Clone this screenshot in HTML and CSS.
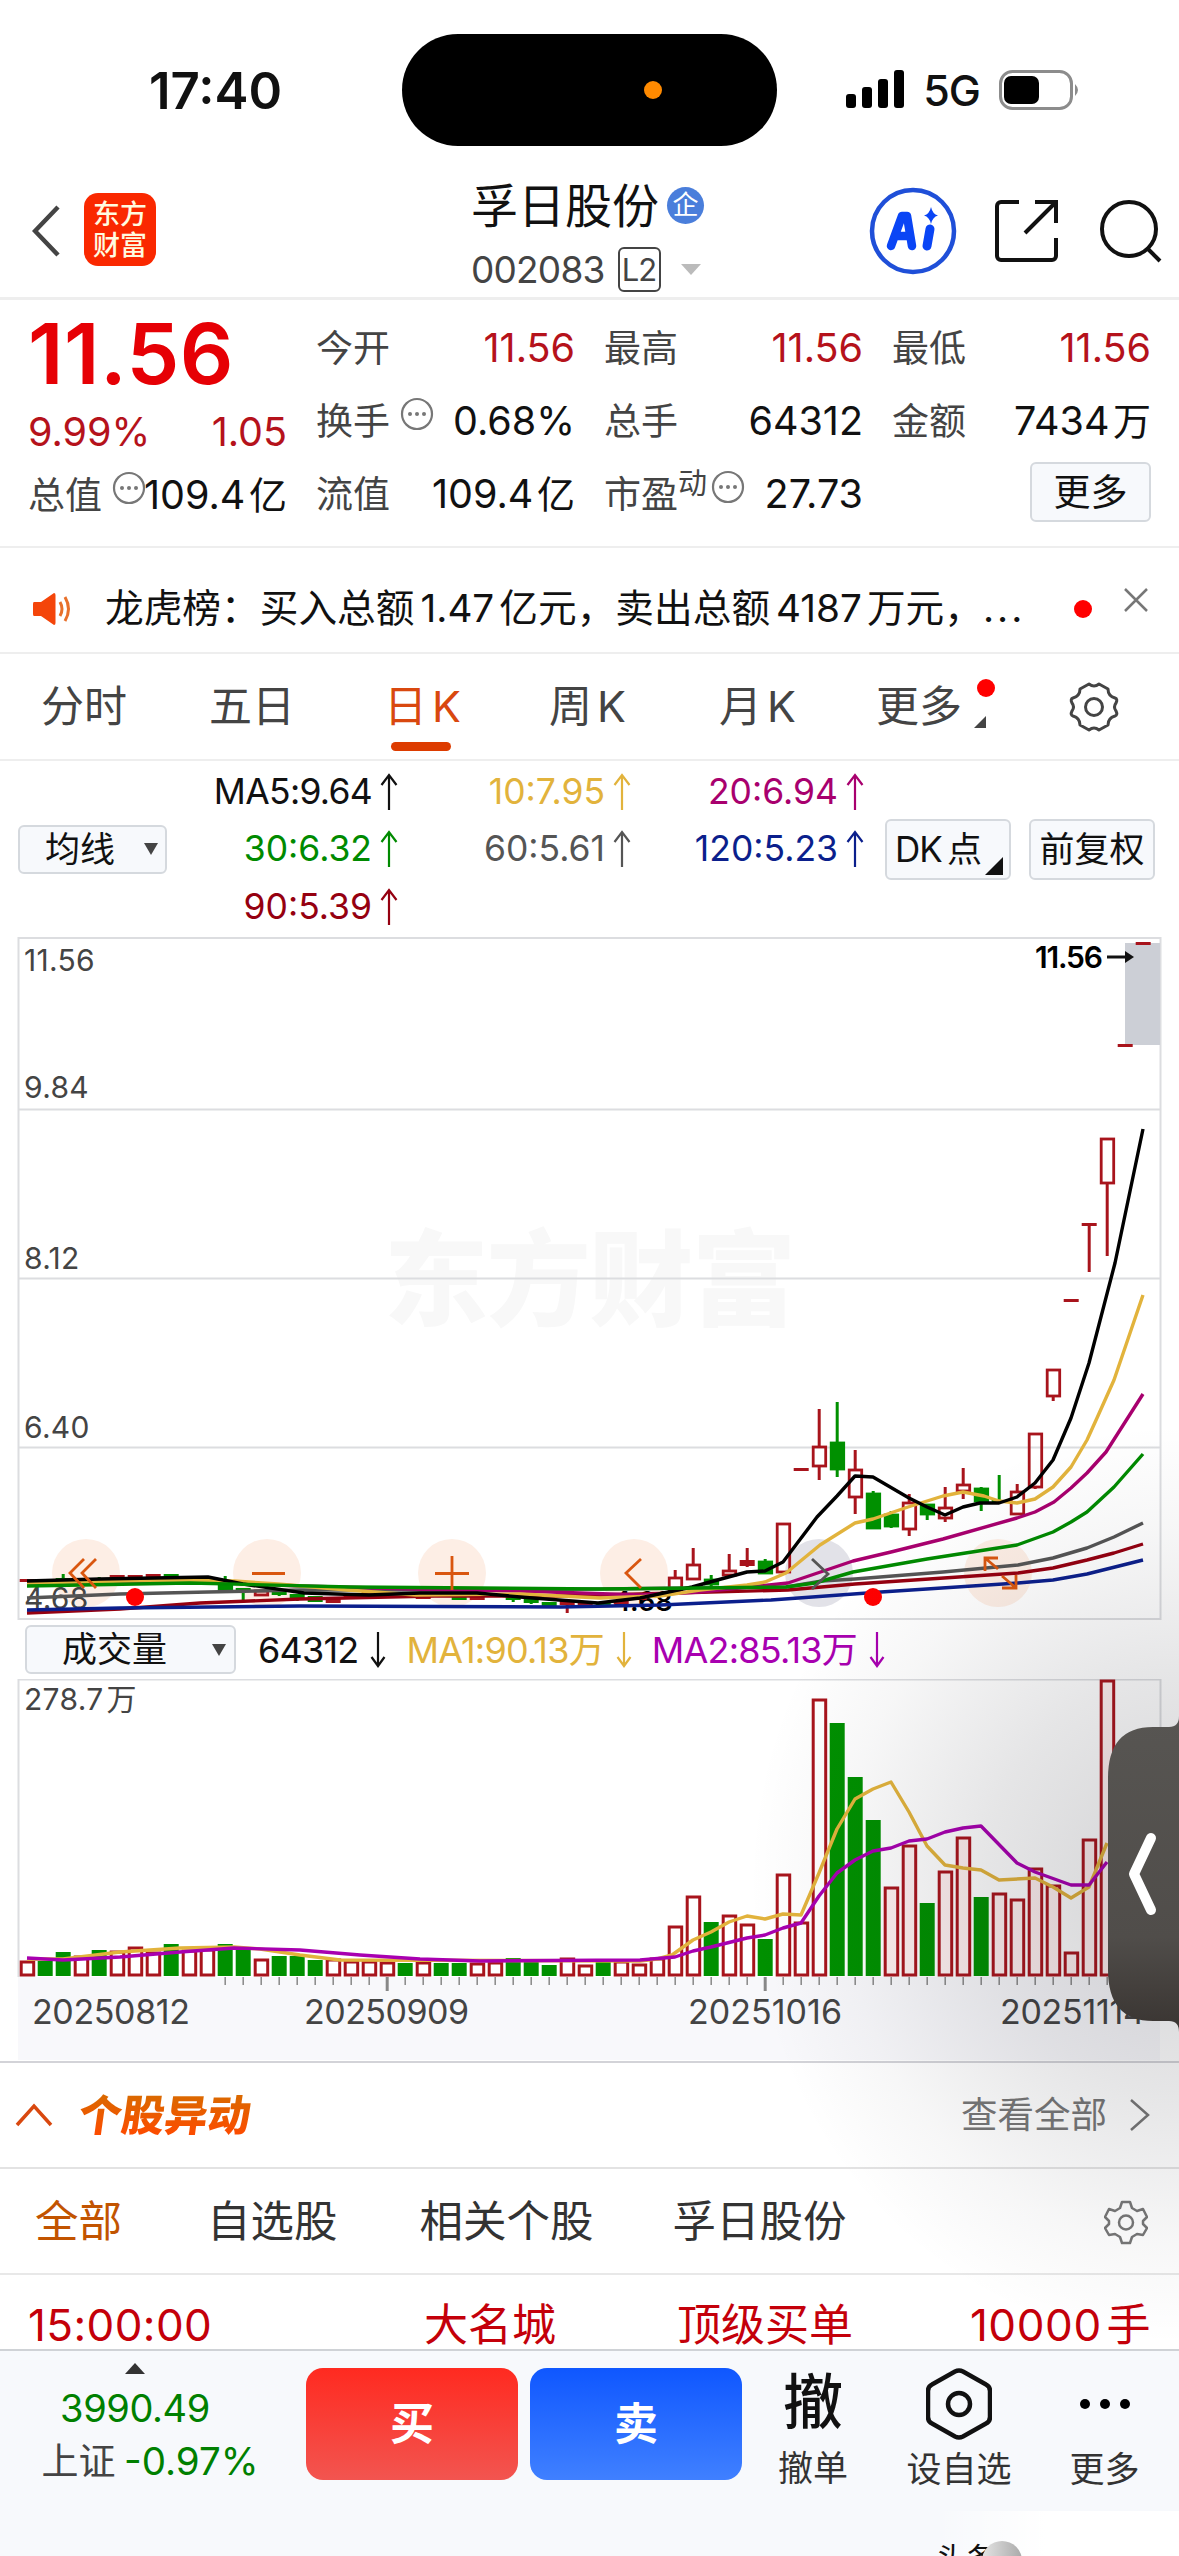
FILE: index.html
```html
<!DOCTYPE html>
<html lang="zh-CN">
<head>
  <meta charset="UTF-8">
  <meta name="viewport" content="width=device-width, initial-scale=1.0">
  <title>孚日股份 002083</title>
  <link rel="stylesheet" href="styles.css">
</head>
<body>
  <svg width="0" height="0" class="sprite">
    <symbol id="up" viewBox="0 0 18 38"><path d="M9 37V2M1.5 12L9 2l7.500 10" fill="none" stroke="currentColor" stroke-width="2.200"/></symbol>
    <symbol id="down" viewBox="0 0 16 36"><path d="M8 0v34M1.500 25L8 34l6.500-9" fill="none" stroke="currentColor" stroke-width="2.200"/></symbol>
    <symbol id="info" viewBox="0 0 34 34"><circle cx="17" cy="17" r="15" fill="none" stroke="#777" stroke-width="2.200"/><g fill="#777"><circle cx="10" cy="17" r="2"/><circle cx="17" cy="17" r="2"/><circle cx="24" cy="17" r="2"/></g></symbol>
  </svg>

  <div class="statusbar">
    <span class="time">17:40</span>
    <div class="island"><i></i></div>
    <div class="signal">
      <svg width="58" height="40" viewBox="0 0 58 40"><rect x="0" y="24" width="10" height="14" rx="3"/><rect x="16" y="17" width="10" height="21" rx="3"/><rect x="32" y="9" width="10" height="29" rx="3"/><rect x="48" y="0" width="10" height="38" rx="3"/></svg>
      <span>5G</span>
      <svg width="82" height="40" viewBox="0 0 82 40"><rect x="1.500" y="1.500" width="71" height="37" rx="12" fill="none" stroke="#8c8c8c" stroke-width="3"/><rect x="5" y="6" width="35" height="28" rx="7"/><path d="M76 14q6 6 0 12z" fill="#8c8c8c"/></svg>
    </div>
  </div>

  <header class="header">
    <svg class="back" width="28" height="52" viewBox="0 0 28 52"><path d="M26 2L3 26l23 24" fill="none" stroke="#444" stroke-width="4.500"/></svg>
    <div class="logo">东方<br>财富</div>
    <div class="title">
      <div class="name">孚日股份<span class="badge">企</span></div>
      <div class="code">002083<span class="l2">L2</span><span class="caret"></span></div>
    </div>
    <div class="tools">
      <svg width="88" height="88" viewBox="0 0 88 88"><circle cx="44" cy="44" r="41" fill="#fff" stroke="#1f4fd8" stroke-width="4.500"/><path d="M22 59L33 29h5l5 30M28 49h13" fill="none" stroke="#0a45f5" stroke-width="8.500" stroke-linejoin="round" stroke-linecap="round"/><path d="M61 42l-3 17" stroke="#0a45f5" stroke-width="9" stroke-linecap="round"/><path d="M62 20q1.500 7 7 8.500q-5.500 1.500-7 8.500q-1.500-7-7-8.500q5.500-1.500 7-8.500z" fill="#0a45f5"/></svg>
      <svg class="share" width="64" height="64" viewBox="0 0 64 64"><path d="M24 3H6a4 4 0 0 0-4 4v50a4 4 0 0 0 4 4h51a4 4 0 0 0 4-4V39M40 3h21v21M61 3L30 34" fill="none" stroke="#111" stroke-width="4"/></svg>
      <svg class="search" width="64" height="66" viewBox="0 0 64 66"><circle cx="29" cy="31" r="27" fill="none" stroke="#111" stroke-width="4"/><path d="M48 51l12 12" stroke="#111" stroke-width="4"/></svg>
    </div>
  </header>

  <section class="quote">
    <div class="col first">
      <div class="price">11.56</div>
      <div class="row red"><span>9.99%</span><span>1.05</span></div>
      <div class="row"><label>总值<svg class="info"><use href="#info"/></svg></label><span>109.4&hairsp;<u>亿</u></span></div>
    </div>
    <div class="col">
      <div class="row"><label>今开</label><span class="red">11.56</span></div>
      <div class="row"><label>换手<svg class="info"><use href="#info"/></svg></label><span>0.68%</span></div>
      <div class="row"><label>流值</label><span>109.4&hairsp;<u>亿</u></span></div>
    </div>
    <div class="col">
      <div class="row"><label>最高</label><span class="red">11.56</span></div>
      <div class="row"><label>总手</label><span>64312</span></div>
      <div class="row"><label>市盈<sup>动</sup><svg class="info pe"><use href="#info"/></svg></label><span>27.73</span></div>
    </div>
    <div class="col">
      <div class="row"><label>最低</label><span class="red">11.56</span></div>
      <div class="row"><label>金额</label><span>7434&hairsp;<u>万</u></span></div>
      <div class="row end"><button class="more">更多</button></div>
    </div>
  </section>

  <section class="notice">
    <svg width="40" height="34" viewBox="0 0 40 34"><path d="M1 10h7L21 1q1.500 0 1.500 2v28q0 2-1.500 2L8 24H1q-1 0-1-2V12q0-2 1-2z" fill="#f4450a"/><path d="M27 10q4 7 0 14M32 5q7 12 0 24" fill="none" stroke="#e8702a" stroke-width="3"/></svg>
    <p>龙虎榜：买入总额<b>1.47</b>亿元，卖出总额<b>4187</b>万元，<em>...</em></p>
    <i class="dot"></i>
    <svg class="close" width="26" height="26" viewBox="0 0 26 26"><path d="M2 2l22 22M24 2L2 24" stroke="#777" stroke-width="2.500"/></svg>
  </section>

  <nav class="tabs">
    <a>分时</a><a>五日</a><a class="active">日<span>K</span></a><a>周<span>K</span></a><a>月<span>K</span></a>
    <a class="has-new">更多<i class="dot"></i><i class="corner"></i></a>
    <svg width="50" height="52" viewBox="0 0 50 52"><path d="M20 3q5 4 10 0l9 5q0 7 7 9q3 1 1 5q-3 4 0 8q2 4-1 5q-7 2-7 9l-9 5q-5-4-10 0l-9-5q0-7-7-9q-3-1-1-5q3-4 0-8q-2-4 1-5q7-2 7-9z" fill="none" stroke="#444" stroke-width="3" stroke-linejoin="round"/><circle cx="25" cy="26" r="8.500" fill="none" stroke="#444" stroke-width="3"/></svg>
  </nav>

  <section class="ma">
    <button class="select">均线</button>
    <div class="ma-list">
      <span class="c5">MA5:9.64<svg><use href="#up"/></svg></span>
      <span class="c10">10:7.95<svg><use href="#up"/></svg></span>
      <span class="c20">20:6.94<svg><use href="#up"/></svg></span>
      <span class="c30">30:6.32<svg><use href="#up"/></svg></span>
      <span class="c60">60:5.61<svg><use href="#up"/></svg></span>
      <span class="c120">120:5.23<svg><use href="#up"/></svg></span>
      <span class="c90">90:5.39<svg><use href="#up"/></svg></span>
    </div>
    <button class="dk">DK&thinsp;点</button>
    <button class="fq">前复权</button>
  </section>

  <svg id="kline" class="chart" width="1179" height="683" viewBox="0 937 1179 683">
    <text class="watermark" x="384" y="1318" textLength="412">东方财富</text>
    <g class="grid">
      <rect x="18.500" y="938" width="1142" height="681"/>
      <path d="M18 1109.500h1142M18 1278.500h1142M18 1447.500h1142"/>
    </g>
    <rect x="1125" y="943" width="35" height="102" fill="#cccfd6"/>
    <g class="hot">
      <circle cx="86" cy="1573" r="34"/><circle cx="267" cy="1573" r="34"/><circle cx="452" cy="1573" r="34"/>
      <circle cx="634" cy="1573" r="34"/><circle cx="819" cy="1573" r="34" class="off"/><circle cx="998" cy="1573" r="34"/>
    </g>
    <g class="scale">
      <text x="24" y="971">11.56</text><text x="24" y="1098">9.84</text><text x="24" y="1269">8.12</text>
      <text x="24" y="1438">6.40</text><text x="24" y="1609">4.68</text>
    </g>
    <text class="low" x="613" y="1611">4.68</text>
    <g id="candles"></g>
    <g id="averages" class="lines"></g>
    <g class="hot-icons">
      <path d="M84 1559l-14 14l14 15M96 1559l-14 14l14 15M252 1573.500h33M435 1573.500h34M452 1556v34M641 1559l-15 14l15 15"/>
      <path class="off" d="M812 1559l16 15l-16 15"/>
      <path d="M985 1571v-13h13M985 1558l13 11M1016 1575v13h-14M1016 1588l-14-12"/>
    </g>
    <circle cx="135" cy="1597" r="9" fill="#f00"/><circle cx="873" cy="1597" r="9" fill="#f00"/>
    <text class="high" x="1035" y="968" textLength="68">11.56</text>
    <path d="M1107 957h22" stroke="#111" stroke-width="3"/><path d="M1125 951l9 6l-9 6z" fill="#111"/>
  </svg>

  <section class="vol">
    <button class="select wide">成交量</button>
    <span class="v0">64312<svg><use href="#down"/></svg></span>
    <span class="v1">MA1:90.13万<svg><use href="#down"/></svg></span>
    <span class="v2">MA2:85.13万<svg><use href="#down"/></svg></span>
  </section>

  <svg id="volume" class="chart" width="1179" height="383" viewBox="0 1679 1179 383">
    <rect x="18" y="1977" width="1142" height="83" fill="#f8f8fb"/>
    <path class="grid" d="M18.500 1977V1679.500H1160.500V1977"/>
    <text class="vmax" x="24" y="1710">278.7&hairsp;万</text>
    <g id="bars"></g>
    <g id="volumeLines" class="lines"></g>
    <g class="dates">
      <text x="32" y="2024" textLength="158">20250812</text><text x="304" y="2024" textLength="165">20250909</text>
      <text x="688" y="2024" textLength="154">20251016</text><text x="1000" y="2024" textLength="145">20251114</text>
    </g>
  </svg>

  <section class="moves">
    <svg width="38" height="24" viewBox="0 0 38 24"><path d="M2 22L19 3l17 19" fill="none" stroke="#d9480f" stroke-width="3.500"/></svg>
    <h2>个股异动</h2>
    <a>查看全部</a>
    <svg class="go" width="22" height="36" viewBox="0 0 22 36"><path d="M2 3l17 15L2 33" fill="none" stroke="#777" stroke-width="2.500"/></svg>
  </section>

  <nav class="filters">
    <a class="active">全部</a><a>自选股</a><a>相关个股</a><a>孚日股份</a>
    <svg width="44" height="46" viewBox="0 0 44 46"><path d="M18 3h8l2 6l5 3l6-2l4 8l-4 4v3l4 4l-4 7l-6-1l-5 3l-2 6h-8l-2-6l-5-3l-6 1l-4-7l4-4v-3l-4-4l4-8l6 2l5-3z" fill="none" stroke="#777" stroke-width="2.500" stroke-linejoin="round"/><circle cx="22" cy="23.500" r="7" fill="none" stroke="#777" stroke-width="2.500"/></svg>
  </nav>

  <section class="deal">
    <span class="clock">15:00:00</span><span>大名城</span><span>顶级买单</span><span class="lots">10000&hairsp;手</span>
  </section>

  <footer class="bar">
    <div class="index">
      <i></i>
      <b>3990.49</b>
      <p>上证 <span>-0.97%</span></p>
    </div>
    <button class="buy">买</button>
    <button class="sell">卖</button>
    <div class="act cancel"><strong>撤</strong><span>撤单</span></div>
    <div class="act fav">
      <svg width="66" height="72" viewBox="0 0 66 72"><path d="M29 3.500q4-2 8 0l23 13q4 2 4 6.500v26q0 4.500-4 6.500l-23 13q-4 2-8 0l-23-13q-4-2-4-6.500V23q0-4.500 4-6.500z" fill="none" stroke="#111" stroke-width="4.500"/><circle cx="33" cy="36" r="11" fill="none" stroke="#111" stroke-width="4.500"/></svg>
      <span>设自选</span>
    </div>
    <div class="act menu">
      <svg width="52" height="72" viewBox="0 0 52 72"><circle cx="6" cy="36" r="5"/><circle cx="26" cy="36" r="5"/><circle cx="46" cy="36" r="5"/></svg>
      <span>更多</span>
    </div>
    <div class="stamp"><span>头条</span><i></i></div>
  </footer>

  <div class="shade"></div>
  <svg class="drawer" width="72" height="316" viewBox="0 0 72 316">
    <defs><linearGradient id="dg" x1="0" y1="0" x2="0" y2="1"><stop offset="0" stop-color="#575552"/><stop offset=".7" stop-color="#504d4a"/><stop offset="1" stop-color="#393431"/></linearGradient></defs>
    <path d="M72 0q0 11-10 11H46Q1 11 1 62v192q0 51 45 51h16q10 0 10 11z" fill="url(#dg)"/>
    <path d="M44 122L27 158l17 36" fill="none" stroke="#fff" stroke-width="10" stroke-linecap="round" stroke-linejoin="round"/>
  </svg>

  <script src="chart.js"></script>
</body>
</html>
```

FILE: styles.css
```css
* {
  box-sizing: border-box;
}
body {
  margin: 0;
  width: 1179px;
  height: 2556px;
  position: relative;
  overflow: hidden;
  background: #fff;
  color: #111;
  font-family: Inter, "Noto Sans CJK SC", sans-serif;
  font-size: 37px;
  line-height: 1;
}
p, h2 {
  margin: 0;
}
svg {
  display: block;
  flex: none;
}
.sprite {
  position: absolute;
}
button {
  font: inherit;
  color: #111;
  padding: 0;
  background: #f7f9fc;
  border: 2px solid #d5d9de;
  border-radius: 6px;
  white-space: nowrap;
}
.dot {
  width: 18px;
  height: 18px;
  border-radius: 50%;
  background: #f00;
}
.red {
  color: #b5121b;
}

/* status bar */
.statusbar {
  height: 160px;
  padding: 34px 98px 0 149px;
  display: flex;
}
.time {
  width: 253px;
  margin-top: 31px;
  font-size: 51px;
  font-weight: 600;
}
.island {
  width: 375px;
  height: 112px;
  border-radius: 56px;
  background: #000;
  display: flex;
  align-items: center;
  justify-content: flex-end;
  padding-right: 115px;
}
.island i {
  width: 18px;
  height: 18px;
  border-radius: 50%;
  background: #ff8a00;
}
.signal {
  display: flex;
  margin: 36px 0 0 auto;
  height: 40px;
  width: 235px;
  justify-content: space-between;
  align-items: center;
}
.signal span {
  font-size: 43px;
  font-weight: 500;
  letter-spacing: -1px;
}

/* header */
.header {
  height: 140px;
  padding-left: 32px;
  display: flex;
  border-bottom: 3px solid #eee;
}
.back {
  margin-top: 45px;
}
.logo {
  margin: 33px 0 0 24px;
  width: 72px;
  height: 73px;
  border-radius: 14px;
  background: #fa2800;
  color: #fffbe0;
  font-size: 27px;
  font-weight: 500;
  line-height: 31px;
  padding-top: 6px;
  text-align: center;
}
.title {
  margin-left: 315px;
  width: 398px;
}
.name {
  height: 87px;
  padding-top: 22px;
  font-size: 47px;
  display: flex;
}
.badge {
  margin: 5px 0 0 8px;
  width: 37px;
  height: 37px;
  line-height: 35px;
  border-radius: 50%;
  background: #4a7edb;
  color: #fff;
  font-size: 26px;
  text-align: center;
}
.code {
  height: 45px;
  display: flex;
  align-items: center;
  color: #444;
  letter-spacing: -0.8px;
}
.l2 {
  margin-left: 13px;
  width: 43px;
  height: 45px;
  border: 2px solid #444;
  border-radius: 6px;
  font-size: 31px;
  line-height: 42px;
  text-align: center;
  letter-spacing: -1px;
}
.caret {
  margin-left: 20px;
  border: 10px solid transparent;
  border-top: 11px solid #bbb;
  border-bottom: 0;
}
.tools {
  display: flex;
  padding-top: 27px;
}
.share {
  margin: 12px 0 0 38px;
}
.search {
  margin: 11px 0 0 41px;
}

/* quote table */
.quote {
  height: 248px;
  padding: 12px 28px 0;
  display: grid;
  grid-template-columns: repeat(4, 259px);
  justify-content: space-between;
  border-bottom: 2px solid #eee;
}
.row {
  height: 73px;
  display: flex;
  align-items: center;
  justify-content: space-between;
  white-space: nowrap;
}
.row span {
  font-size: 39.500px;
  margin-top: 1px;
}
.row u {
  font-size: 38px;
  text-decoration: none;
}
.row label {
  color: #444;
  display: flex;
}
.first .row:last-child {
  height: 52px;
}
.price {
  height: 84px;
  line-height: 84px;
  font-size: 84px;
  font-weight: 600;
  color: #e60005;
  letter-spacing: 0.5px;
}
.info {
  width: 34px;
  height: 34px;
  margin: -6px 0 0 10px;
}
.first .info {
  margin-right: -40px;
}
.info.pe {
  margin-left: 4px;
}
sup {
  font-size: 29px;
  line-height: 1;
  margin-top: -7px;
}
.end {
  justify-content: flex-end;
}
.more {
  width: 121px;
  height: 60px;
  margin-top: -5px;
}

/* notice */
.notice {
  height: 106px;
  padding-top: 17px;
  padding-left: 33px;
  display: flex;
  align-items: center;
  border-bottom: 2px solid #eee;
}
.notice p {
  width: 932px;
  margin-left: 32px;
  font-size: 38.700px;
  white-space: nowrap;
}
.notice b {
  font-weight: 400;
  margin: 0 5px 0 6px;
}
.notice em {
  font-style: normal;
  letter-spacing: 3px;
}
.notice .dot {
  margin-left: 37px;
}
.close {
  margin: -18px 0 0 31px;
}

/* period tabs */
.tabs {
  height: 107px;
  padding-left: 41px;
  display: grid;
  grid-template-columns: 168px 175px 165px 170px 157px 193px 50px;
  align-items: center;
  font-size: 43px;
  color: #444;
  border-bottom: 2px solid #eee;
}
.tabs a {
  position: relative;
  height: 60px;
  line-height: 58px;
  white-space: nowrap;
}
.tabs a span {
  margin-left: 5px;
}
.tabs .active {
  color: #d9480f;
}
.tabs .active::after {
  content: "";
  position: absolute;
  left: 7px;
  bottom: -14px;
  width: 60px;
  height: 9px;
  border-radius: 5px;
  background: #dd3c00;
}
.has-new .dot {
  position: absolute;
  left: 101px;
  top: 2px;
}
.corner {
  position: absolute;
  left: 98px;
  top: 39px;
  border-left: 12px solid transparent;
  border-bottom: 12px solid #444;
}

/* moving average legend */
.ma {
  height: 176px;
  padding-left: 18px;
  display: flex;
  align-items: center;
  font-size: 35px;
}
.select {
  width: 149px;
  height: 49px;
  padding-left: 25px;
  font-size: 35px;
  display: flex;
  align-items: center;
}
.select::after {
  content: "";
  margin-left: 29px;
  border: 7px solid transparent;
  border-top: 12px solid #444;
  border-bottom: 0;
}
.ma-list {
  width: 697px;
  display: grid;
  grid-template-columns: 231px 233px 233px;
  grid-auto-rows: 57.500px;
  font-size: 35.500px;
}
.ma-list span {
  display: flex;
  align-items: center;
  justify-content: flex-end;
}
.ma-list svg {
  width: 18px;
  height: 38px;
  margin-left: 8px;
}
.ma-list .c5 {
  letter-spacing: -0.7px;
}
.c10 { color: #e2b33c; }
.c20 { color: #a8006e; }
.c30 { color: #008a00; }
.c60 { color: #555; }
.c90 { color: #950010; }
.c120 { color: #0b1f8c; }
.dk, .fq {
  width: 126px;
  height: 61px;
  font-size: 35px;
}
.dk {
  position: relative;
  margin: 0 18px 0 21px;
  padding-right: 20px;
  letter-spacing: -1px;
}
.dk::after {
  content: "";
  position: absolute;
  right: 6px;
  bottom: 3px;
  border-left: 18px solid transparent;
  border-bottom: 18px solid #111;
}

/* charts */
.chart .grid {
  fill: none;
  stroke: #dcdde0;
  stroke-width: 2;
}
.scale, .vmax {
  font-size: 30px;
  fill: #444;
  letter-spacing: 0.3px;
}
.watermark {
  font-size: 104px;
  font-weight: 900;
  fill: #f8f8f8;
}
.high, .low {
  font-size: 30px;
  font-weight: 600;
}
.low {
  font-size: 27px;
}
.hot circle {
  fill: #fdeee5;
}
.hot .off {
  fill: #e2e2e8;
}
.hot-icons path {
  fill: none;
  stroke: #d9560f;
  stroke-width: 2.800;
}
.hot-icons .off {
  stroke: #555;
}
.lines path {
  fill: none;
  stroke-width: 3.400;
  stroke-linejoin: round;
}
.dates {
  font-size: 34px;
  fill: #444;
}
.vol {
  height: 59px;
  padding-left: 25px;
  display: flex;
  align-items: center;
  font-size: 36px;
  letter-spacing: -0.8px;
}
.vol span {
  display: flex;
  align-items: center;
  margin-left: 20px;
  white-space: nowrap;
}
.vol .v0 {
  margin-left: 22px;
}
.vol span svg {
  width: 16px;
  height: 36px;
  margin-left: 12px;
}
.wide {
  width: 211px;
  height: 49px;
  padding-left: 35px;
  letter-spacing: 0;
}
.wide::after {
  margin-left: 45px;
}
.v1 { color: #e2b33c; }
.v2 { color: #a800b0; }

/* unusual moves */
.moves {
  height: 108px;
  padding-left: 15px;
  margin-top: -1px;
  display: flex;
  align-items: center;
  border-top: 2px solid #d3d3d8;
  border-bottom: 2px solid #e3e3e3;
}
.moves h2 {
  margin-left: 26px;
  font-size: 43px;
  font-weight: 900;
  transform: skewX(-8deg);
  background: linear-gradient(#d96a00, #ff4a00);
  -webkit-background-clip: text;
  color: transparent;
}
.moves a {
  margin-left: auto;
  font-size: 36.500px;
  color: #777;
}
.go {
  margin: 0 28px 0 22px;
}
.filters {
  height: 106px;
  padding: 2px 31px 0 35px;
  display: flex;
  align-items: center;
  font-size: 43.500px;
  color: #333;
  border-bottom: 2px solid #e8e8e8;
}
.filters a {
  margin-right: 82px;
}
.filters a.active {
  margin-right: 85px;
  color: #c25400;
}
.filters a:nth-child(3) {
  margin-right: 79px;
}
.filters svg {
  margin-left: auto;
}
.deal {
  height: 74px;
  padding: 28px 28px 0;
  display: grid;
  grid-template-columns: 396px 253px 1fr auto;
  align-items: start;
  font-size: 44px;
  color: #c4000a;
}
.clock {
  letter-spacing: 0.4px;
}
.lots {
  letter-spacing: 0.6px;
}

/* bottom bar */
.bar {
  position: relative;
  height: 208px;
  display: flex;
  align-items: flex-start;
  background: #f7f9fc;
  border-top: 2px solid #cfd2d6;
}
.index {
  width: 306px;
  padding-right: 36px;
  text-align: center;
  color: #008000;
}
.index i {
  display: block;
  width: 0;
  margin: 12px auto 0;
  border: 10px solid transparent;
  border-bottom: 11px solid #333;
  border-top: 0;
}
.index b {
  display: block;
  margin-top: 15px;
  font-size: 38px;
  font-weight: 400;
  letter-spacing: -0.4px;
}
.index p {
  margin: 15px -30px 0 0;
  color: #444;
  white-space: nowrap;
  word-spacing: -2px;
}
.index span {
  color: #008000;
  font-size: 38.500px;
}
.buy, .sell {
  width: 212px;
  height: 112px;
  margin: 17px 12px 0 0;
  border: 0;
  border-radius: 17px;
  color: #fff;
  font-size: 44px;
  font-weight: 700;
  background: linear-gradient(#ff2a20, #f25550);
}
.sell {
  background: linear-gradient(#0f57ff, #4080ff);
}
.act {
  height: 135px;
  padding-top: 17px;
  display: flex;
  flex-direction: column;
  align-items: center;
  font-size: 35px;
  color: #333;
}
.act strong {
  height: 72px;
  line-height: 68px;
  font-size: 60px;
  font-weight: 500;
  color: #111;
}
.act span {
  margin-top: 12px;
}
.cancel {
  width: 118px;
}
.fav {
  width: 174px;
}
.menu {
  width: 117px;
}
.stamp {
  position: absolute;
  left: 936px;
  bottom: 0;
  width: 243px;
  height: 46px;
  overflow: hidden;
  background: linear-gradient(90deg, transparent, #fff 45%);
}
.stamp span {
  position: absolute;
  top: 32px;
  left: 0;
  font-size: 30px;
  color: #111;
}
.stamp i {
  position: absolute;
  left: 46px;
  top: 30px;
  width: 40px;
  height: 40px;
  border-radius: 50%;
  background: linear-gradient(90deg, #e4e4e4, #aaa);
}

/* floating drawer */
.shade {
  position: absolute;
  left: 740px;
  top: 1420px;
  width: 439px;
  height: 928px;
  background: radial-gradient(ellipse 430px 460px at 100% 50%, rgba(20, 20, 30, .19), rgba(20, 20, 30, .11) 45%, rgba(20, 20, 30, .035) 78%, transparent);
}
.drawer {
  position: absolute;
  left: 1107px;
  top: 1716px;
}
```

FILE: chart.js
```js
const RED = '#a8141c';
const GREEN = '#009000';
const barX = i => 27.2 + i * 18;

// [index, colour, body top, body bottom, wick top, wick bottom]
const candles = [
  [0, 'r', 1580, 1580], [1, 'g', 1580, 1581], [2, 'g', 1579, 1580, 1574, 1582], [4, 'g', 1579, 1580, 1577, 1581],
  [5, 'r', 1576, 1578], [6, 'r', 1576, 1578], [7, 'r', 1575, 1577], [8, 'g', 1575, 1577], [9, 'r', 1577, 1578],
  [10, 'r', 1578, 1579], [11, 'g', 1582, 1591, 1576, 1591], [12, 'g', 1589, 1590, 1588, 1602], [13, 'r', 1591, 1595],
  [14, 'g', 1592, 1593, 1589, 1596], [15, 'g', 1595, 1597, 1594, 1601], [16, 'g', 1597, 1600], [17, 'r', 1598, 1601],
  [18, 'r', 1594, 1595], [19, 'r', 1593, 1594], [22, 'r', 1596, 1597], [24, 'g', 1597, 1598], [25, 'r', 1597, 1598],
  [27, 'g', 1597, 1598, 1595, 1602], [28, 'g', 1600, 1601, 1597, 1604], [29, 'g', 1603, 1605], [30, 'r', 1601, 1603, 1601, 1613],
  [31, 'r', 1603, 1604], [32, 'g', 1603, 1605], [33, 'r', 1601, 1602], [34, 'r', 1597, 1598], [35, 'r', 1594, 1595],
  [36, 'r', 1578, 1592, 1570, 1592], [37, 'r', 1565, 1579, 1548, 1579], [38, 'g', 1580, 1584, 1575, 1591],
  [39, 'r', 1571, 1575, 1554, 1576], [40, 'r', 1561, 1564, 1548, 1567], [41, 'g', 1562, 1573, 1559, 1574],
  [42, 'r', 1524, 1572], [43, 'r', 1469, 1469], [44, 'r', 1447, 1466, 1409, 1480], [45, 'g', 1443, 1469, 1402, 1477],
  [46, 'r', 1470, 1497, 1450, 1514], [47, 'g', 1494, 1528, 1491, 1529], [48, 'g', 1515, 1526, 1511, 1528],
  [49, 'r', 1503, 1529, 1494, 1536], [50, 'g', 1505, 1514, 1505, 1520], [51, 'r', 1508, 1518, 1487, 1522],
  [52, 'r', 1485, 1491, 1468, 1499], [53, 'g', 1489, 1501, 1487, 1511], [54, 'g', 1501, 1501, 1475, 1501],
  [55, 'r', 1492, 1514, 1484, 1515], [56, 'r', 1434, 1487, 1434, 1489], [57, 'r', 1370, 1396, 1370, 1401],
  [58, 'r', 1300, 1300], [59, 'r', 1224, 1224, 1224, 1272], [60, 'r', 1139, 1183, 1139, 1256],
  [61, 'r', 1045, 1045], [62, 'r', 943, 943]
];

const averages = {
  '#950010': '27,1613 120,1609 200,1603 300,1599 434,1596 560,1596 640,1594 788,1590 855,1584 1018,1573 1053,1568 1087,1560 1114,1553 1143,1544',
  '#0b1f8c': '27,1610 120,1608 300,1606 560,1607 661,1605 771,1600 881,1592 1018,1583 1053,1580 1087,1574 1143,1560',
  '#555': '27,1598 120,1594 208,1592 300,1590 450,1590 600,1589 786,1587 822,1581 855,1579 943,1572 1018,1565 1053,1558 1087,1548 1114,1537 1143,1523',
  '#a8006e': '27,1584 190,1581 300,1586 450,1590 520,1591 640,1595 700,1592 788,1583 853,1561 891,1552 943,1539 1017,1518 1035,1512 1054,1502 1071,1488 1087,1473 1106,1452 1143,1394',
  '#e2b33c': '27,1583 173,1580 234,1581 278,1584 347,1590 416,1595 520,1594 600,1598 660,1596 700,1590 747,1585 765,1582 786,1573 820,1545 855,1523 873,1519 908,1507 943,1496 963,1492 984,1496 999,1501 1017,1503 1035,1499 1053,1487 1071,1467 1087,1440 1097,1418 1114,1380 1143,1295',
  '#000': '27,1581 100,1579 208,1577 243,1584 304,1593 369,1595 420,1593 477,1593 520,1597 598,1603 640,1598 692,1587 710,1582 747,1572 765,1571 783,1562 817,1517 837,1496 855,1476 873,1477 909,1498 927,1507 945,1515 963,1507 980,1503 999,1503 1017,1497 1035,1483 1053,1460 1071,1418 1089,1363 1115,1263 1143,1129',
  '#008a00': '27,1586 190,1583 350,1587 600,1589 700,1588 786,1587 815,1583 853,1572 927,1559 1017,1545 1053,1532 1071,1522 1087,1512 1114,1487 1143,1454'
};

const volumeTops = [
  'r1961', 'g1961', 'g1952', 'r1956', 'g1950', 'r1951', 'r1947', 'r1952', 'g1944', 'r1950', 'r1949', 'g1944', 'g1949',
  'r1959', 'g1956', 'g1956', 'g1960', 'r1959', 'r1961', 'r1961', 'r1962', 'g1963', 'r1962', 'g1963', 'g1963', 'r1963',
  'r1962', 'g1958', 'g1962', 'g1965', 'r1958', 'r1965', 'g1962', 'r1961', 'r1964', 'r1958', 'r1926', 'r1896', 'g1922',
  'r1915', 'r1924', 'g1939', 'r1874', 'r1922', 'r1699', 'g1723', 'g1777', 'g1820', 'r1887', 'r1845', 'g1903', 'r1871',
  'r1837', 'g1897', 'r1893', 'r1899', 'r1868', 'r1885', 'r1952', 'r1839', 'r1680'
];

const volumeLines = {
  '#e2b33c': '27,1959 63,1959 120,1952 180,1948 234,1947 260,1949 300,1955 340,1960 640,1961 657,1959 672,1955 693,1940 711,1932 729,1922 747,1916 765,1919 783,1914 801,1915 819,1873 837,1829 855,1799 873,1789 891,1782 909,1812 927,1846 945,1865 963,1868 981,1870 999,1880 1035,1878 1053,1887 1071,1898 1089,1887 1107,1843',
  '#a800b0': '27,1958 63,1960 120,1957 180,1952 234,1948 300,1950 360,1955 420,1959 480,1961 640,1960 675,1957 693,1951 711,1947 747,1938 765,1935 783,1928 801,1923 819,1896 837,1873 855,1860 873,1851 891,1848 909,1841 927,1839 945,1832 963,1828 981,1826 1017,1863 1035,1872 1071,1885 1089,1885 1107,1862'
};

function drawCandles() {
  let out = '';
  candles.forEach(([i, type, top, bottom, high, low]) => {
    const x = barX(i);
    const color = type === 'r' ? RED : GREEN;
    if (high) {
      out += `<path d="M${x} ${high}V${top}M${x} ${bottom}V${low}" stroke="${color}" stroke-width="3"/>`;
    }
    if (bottom - top < 4) {
      out += `<rect x="${x - 7.5}" y="${top - 1}" width="15" height="${bottom - top + 3}" fill="${color}"/>`;
    } else {
      const fill = type === 'r' ? 'none' : color;
      out += `<rect x="${x - 6}" y="${top}" width="12.500" height="${bottom - top}" fill="${fill}" stroke="${color}" stroke-width="2.800"/>`;
    }
  });
  document.getElementById('candles').innerHTML = out;
}

function drawVolume() {
  let out = '';
  volumeTops.forEach((item, i) => {
    const x = barX(i);
    const top = Number(item.slice(1));
    if (item[0] === 'g') {
      out += `<rect x="${x - 7.5}" y="${top}" width="15" height="${1976 - top}" fill="${GREEN}"/>`;
    } else {
      const fill = i < 48 ? '#fff' : '#fff0f0';
      out += `<rect x="${x - 6}" y="${top + 1}" width="12.500" height="${1974 - top}" fill="${fill}" stroke="${RED}" stroke-width="3"/>`;
    }
    if (i > 10) {
      const major = i === 20 || i === 41;
      out += `<path d="M${x} 1977v${major ? 14 : 8}" stroke="#888" stroke-width="${major ? 3 : 1.5}"/>`;
    }
  });
  document.getElementById('bars').innerHTML = out;
}

function drawLines(id, lines) {
  document.getElementById(id).innerHTML = Object.entries(lines)
    .map(([color, points]) => `<path d="M${points.replace(/ /g, 'L')}" stroke="${color}"/>`)
    .join('');
}

drawCandles();
drawLines('averages', averages);
drawVolume();
drawLines('volumeLines', volumeLines);
```
